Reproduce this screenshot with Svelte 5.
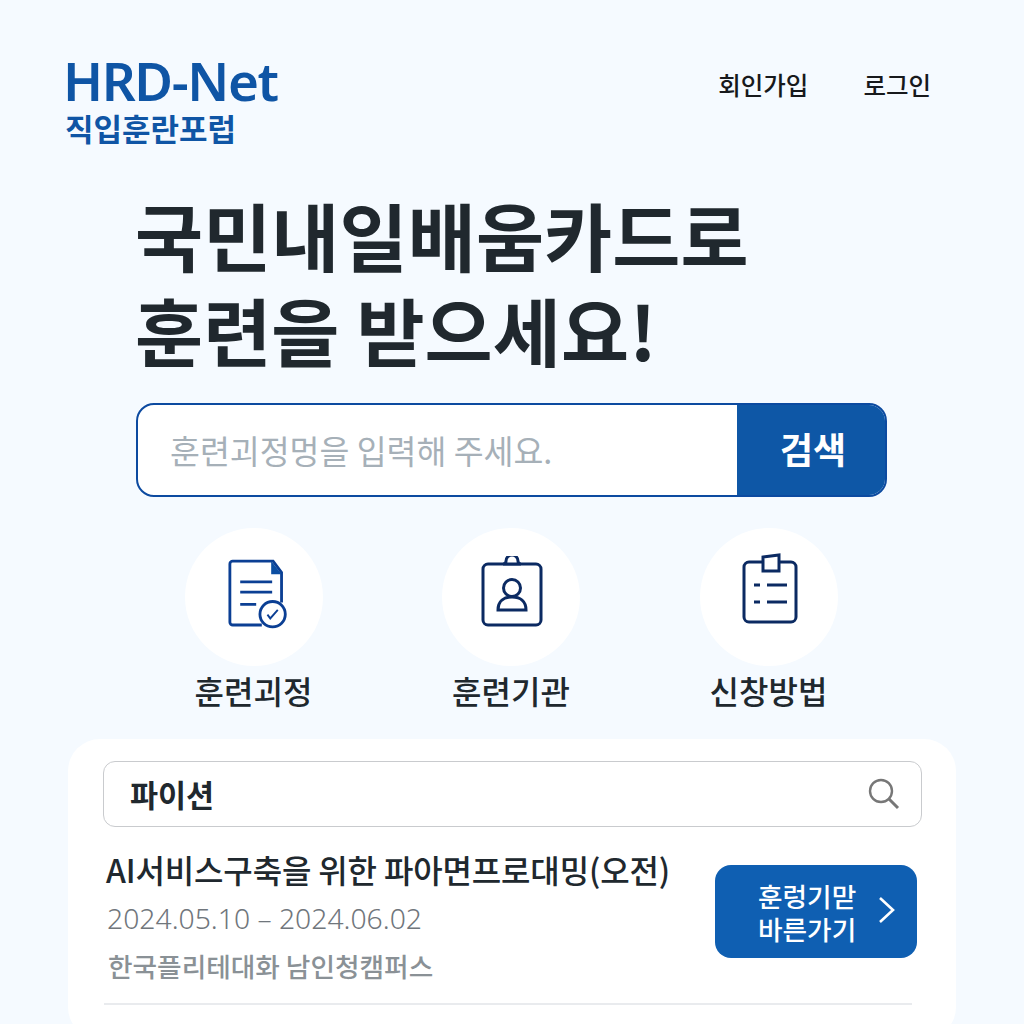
<script lang="ts">
	const shortcuts = [
		{ label: '훈련괴정', icon: 'doc' },
		{ label: '훈련기관', icon: 'badge' },
		{ label: '신창방법', icon: 'clip' }
	];
</script>

<main>
	<header>
		<div class="logo">
			<div class="logo-name">HRD-Net</div>
			<div class="logo-sub">직입훈란포럽</div>
		</div>
		<nav>
			<span>회인가입</span>
			<span>로그인</span>
		</nav>
	</header>

	<section class="hero">
		<h1>국민내일배움카드로<br />훈련을 받으세요!</h1>
		<div class="search">
			<div class="placeholder">훈련괴정멍을 입력해 주세요.</div>
			<div class="search-btn">검색</div>
		</div>
	</section>

	<section class="shortcuts">
		{#each shortcuts as s}
			<div class="shortcut">
				<div class="circle">
					{#if s.icon === 'doc'}
						<svg class="doc" width="62" height="72" viewBox="0 0 66 74" fill="none" stroke="#0b3f94" stroke-width="3">
							<path d="M36 70H5a3 3 0 0 1-3-3V5a3 3 0 0 1 3-3h43l9 12v32" />
							<path d="M46 2l11 14H46z" fill="#0b4ea2" stroke="none" />
							<path d="M13 24h34M13 35h34M13 48h17" />
							<circle cx="47.5" cy="58.5" r="13.5" fill="#fff" />
							<path d="M42 59l3 4 8-9" stroke-width="2" />
						</svg>
					{:else if s.icon === 'badge'}
						<svg class="badge" width="62" height="72" viewBox="0 0 62 72" fill="none" stroke="#0b2a62" stroke-width="3">
							<rect x="2" y="8" width="58" height="61" rx="5" />
							<path d="M22 8c2 0 3-1 3-3a6 6 0 0 1 12 0c0 2 1 3 3 3z" fill="#fff" />
							<circle cx="31" cy="32" r="8.5" />
							<path d="M17 54c0-9 6-13 14-13s14 4 14 13z" />
						</svg>
					{:else}
						<svg class="clip" width="56" height="72" viewBox="0 0 56 72" fill="none" stroke="#0b2a62" stroke-width="3">
							<rect x="2" y="9" width="52" height="60" rx="5" />
							<path d="M21 4l16-2v16H21z" fill="#fff" />
							<path d="M12 32h6M25 32h20M12 49h6M25 49h20" />
						</svg>
					{/if}
				</div>
				<div class="label">{s.label}</div>
			</div>
		{/each}
	</section>

	<section class="card">
		<div class="query">
			<span>파이션</span>
			<svg width="32" height="32" viewBox="0 0 32 32" fill="none" stroke="#777" stroke-width="2.4">
				<circle cx="13" cy="13" r="11" />
				<path d="M21 21l9 9" stroke-width="3" />
			</svg>
		</div>
		<div class="result">
			<div class="info">
				<div class="title">AI서비스구축을 위한 파아면프로대밍(오전)</div>
				<div class="date">2024.05.10 – 2024.06.02</div>
				<div class="school">한국플리테대화 남인청캠퍼스</div>
			</div>
			<div class="go">
				<div class="go-text">훈렁기맏<br />바른가기</div>
				<svg class="chevron" width="18" height="28" viewBox="0 0 18 28" fill="none" stroke="#fff" stroke-width="2.6">
					<path d="M2 2l13 12L2 26" />
				</svg>
			</div>
		</div>
	</section>
</main>

<style>
	:global(body) {
		margin: 0;
		background: #f5faff;
	}

	main {
		height: 1024px;
		overflow: hidden;
		box-sizing: border-box;
		font-family: 'Noto Sans CJK KR', 'Noto Sans', sans-serif;
		color: #20282e;
		padding-top: 53px;
	}

	header {
		display: flex;
		justify-content: space-between;
		padding: 0 93px 0 65px;
	}

	.logo-name {
		margin-left: -2px;
		font-family: 'Noto Sans', 'Liberation Sans', sans-serif;
		font-size: 53px;
		line-height: 56px;
		font-weight: 600;
		letter-spacing: -1.4px;
		color: #0f55a5;
	}

	.logo-sub {
		padding-top: 1px;
		font-size: 31px;
		line-height: 36px;
		font-weight: 700;
		color: #0f55a5;
	}

	nav {
		display: flex;
		gap: 55px;
		padding-top: 15px;
		font-size: 24.5px;
		line-height: 34px;
		font-weight: 500;
		color: #17191c;
	}

	.hero {
		padding: 0 137px 0 136px;
		margin-top: 40px;
	}

	h1 {
		margin: 0 0 0 -1px;
		font-size: 74px;
		line-height: 95px;
		font-weight: 700;
		letter-spacing: 0.1px;
		color: #20282e;
	}

	.search {
		display: flex;
		margin-top: 27px;
		height: 94px;
		box-sizing: border-box;
		border: 2px solid #0c4aa0;
		border-radius: 18px;
		background: #fff;
		overflow: hidden;
	}

	.placeholder {
		flex: 1;
		padding-left: 32px;
		font-size: 32.5px;
		line-height: 90px;
		color: #a6b0b8;
	}

	.search-btn {
		width: 148px;
		padding-left: 4px;
		box-sizing: border-box;
		background: #0e57a6;
		color: #fff;
		text-align: center;
		font-size: 36px;
		font-weight: 700;
		line-height: 86px;
	}

	.shortcuts {
		display: grid;
		grid-template-columns: repeat(3, 257.5px);
		justify-content: center;
		margin: 31px 0 0 -2px;
	}

	.shortcut {
		display: flex;
		flex-direction: column;
		align-items: center;
	}

	.circle {
		width: 138px;
		height: 138px;
		border-radius: 50%;
		background: #fff;
		display: flex;
		align-items: center;
		justify-content: center;
	}

	.doc {
		margin: 0 0 6px 10px;
	}

	.badge {
		margin: 0 0 10px 2px;
	}

	.clip {
		margin: 0 0 16px 2px;
	}

	.label {
		margin-top: 3px;
		font-size: 32px;
		line-height: 42px;
		font-weight: 500;
		color: #20282e;
	}

	.card {
		margin: 28px 68px 0;
		height: 300px;
		box-sizing: border-box;
		background: #fff;
		border-radius: 32px;
		padding: 22px 34px 0 35px;
	}

	.query {
		display: flex;
		align-items: center;
		justify-content: space-between;
		height: 66px;
		box-sizing: border-box;
		border: 1px solid #c9cbce;
		border-radius: 12px;
		padding: 0 21px 0 26px;
		font-size: 30.5px;
		font-weight: 700;
		color: #20282e;
	}

	.result {
		display: flex;
		justify-content: space-between;
		margin: 17px 10px 0 1px;
		padding-bottom: 13px;
		border-bottom: 2px solid #e9ebee;
	}

	.info {
		padding-left: 2px;
	}

	.title {
		font-size: 32px;
		line-height: 50px;
		font-weight: 500;
		letter-spacing: -0.15px;
		color: #20282e;
	}

	.date {
		padding: 1px 0 0 1px;
		font-family: 'Noto Sans', sans-serif;
		font-size: 28.3px;
		line-height: 46px;
		font-weight: 300;
		color: #70767c;
	}

	.school {
		padding: 1px 0 0 2px;
		font-size: 26.7px;
		line-height: 48px;
		font-weight: 500;
		color: #8a9196;
	}

	.go {
		display: flex;
		align-items: center;
		gap: 22px;
		align-self: flex-start;
		margin: 21px -5px 0 0;
		width: 202px;
		height: 93px;
		box-sizing: border-box;
		padding-left: 43px;
		background: #0f5fb2;
		border-radius: 16px;
		color: #fff;
	}

	.go-text {
		font-size: 26.7px;
		line-height: 33px;
		font-weight: 500;
		text-align: center;
	}

	.chevron {
		margin-bottom: 4px;
	}
</style>
